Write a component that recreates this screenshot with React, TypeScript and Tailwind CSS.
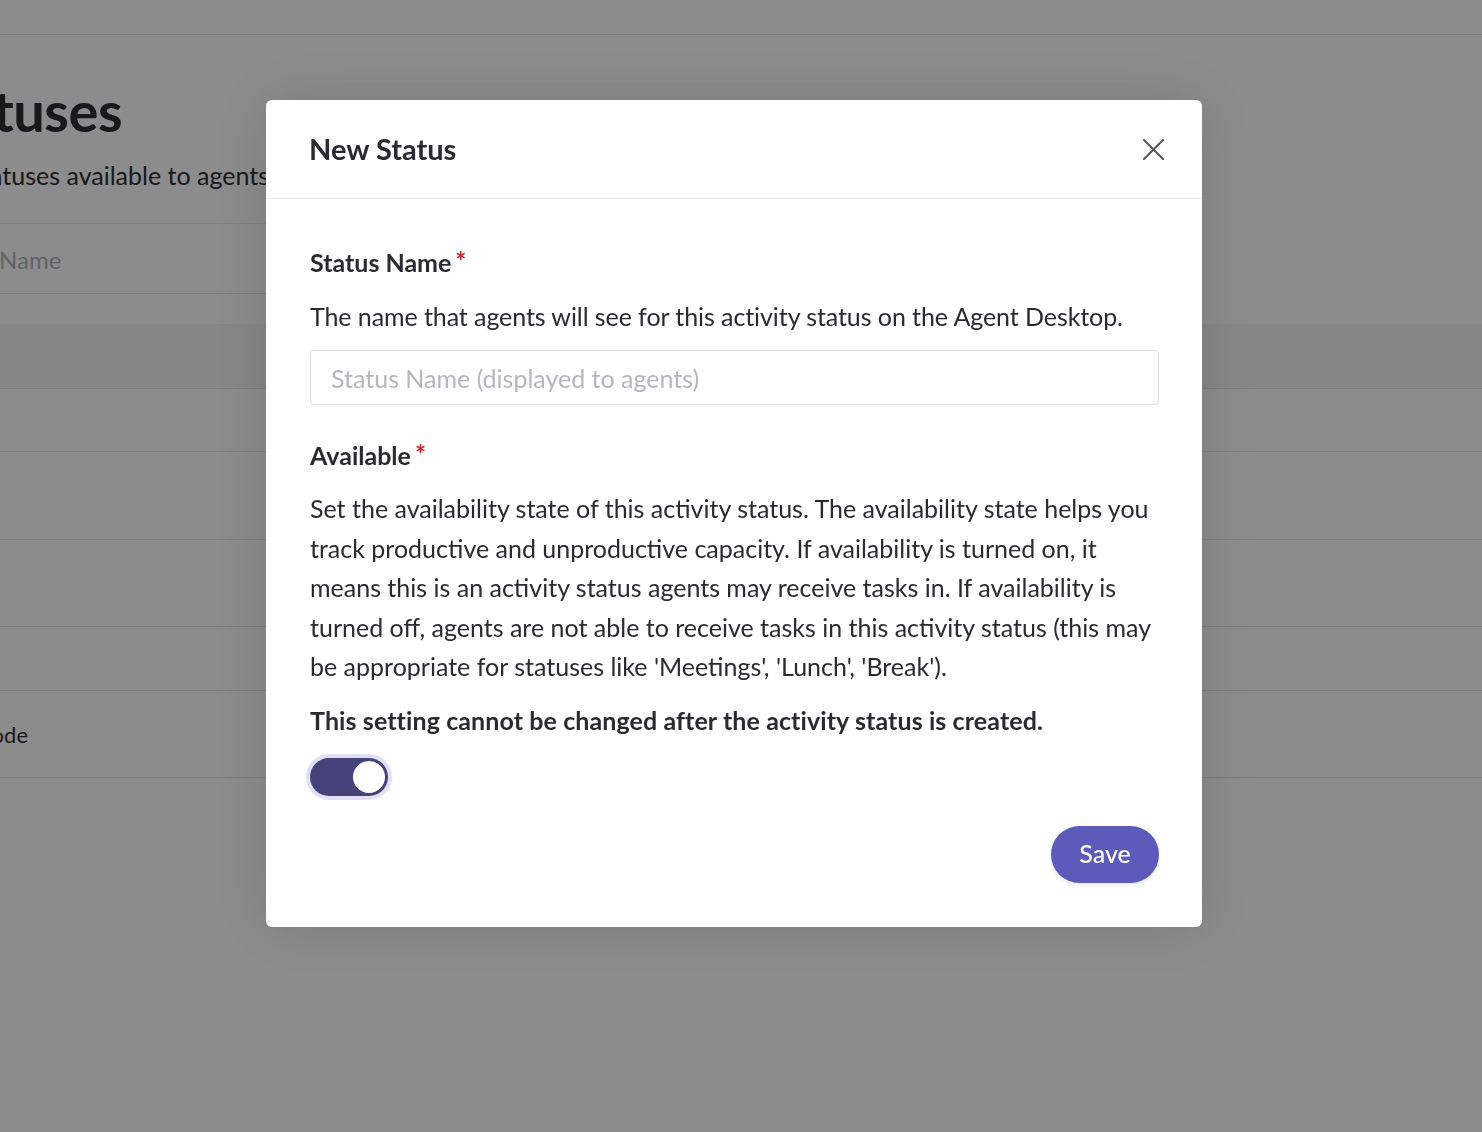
const font = { fontFamily: "Lato, 'Open Sans', sans-serif" };

const rows = [
  { h: "h-[64px]", bg: "bg-[#f5f5f6]", label: "" },
  { h: "h-[63px]", bg: "bg-white", label: "" },
  { h: "h-[88px]", bg: "bg-white", label: "" },
  { h: "h-[87px]", bg: "bg-white", label: "" },
  { h: "h-[64px]", bg: "bg-white", label: "" },
  { h: "h-[87px]", bg: "bg-white", label: "Offline Mode" },
];

function Background() {
  return (
    <div className="min-h-[1132px] bg-white overflow-hidden text-[#2e2e36]" style={font}>
      <div className="h-[35px] border-b border-[#e4e4e7]" />
      <div className="flex w-[122px] justify-end mt-[44px] whitespace-nowrap">
        <h1 className="text-[56px] font-bold leading-[64px] tracking-[-0.5px]">Activity Statuses</h1>
      </div>
      <div className="flex w-[269px] justify-end mt-[16px] whitespace-nowrap">
        <p className="text-[25px] leading-[32px]">Manage the activity statuses available to agents</p>
      </div>
      <div className="w-[1000px] mt-[32px] border-t border-[#e4e4e7] border-b h-[71px] flex items-center">
        <span className="text-[24px] text-[#b4b4ba] mt-[3px] -ml-[1px]">Name</span>
      </div>
      <div className="h-[30px]" />
      {rows.map((r, i) => (
        <div key={i} className={`${r.h} ${r.bg} ${i > 0 ? "border-t border-[#e4e4e7]" : ""} flex items-center`}>
          {r.label && (
            <div className="flex w-[28px] justify-end whitespace-nowrap">
              <span className="text-[22px]">{r.label}</span>
            </div>
          )}
        </div>
      ))}
      <div className="border-t border-[#e4e4e7]" />
    </div>
  );
}

function Toggle() {
  return (
    <div className="w-[86px] h-[46px] rounded-full bg-[#e2e0f7] p-[4px]">
      <div className="w-[78px] h-[38px] rounded-full bg-[#46437a] flex items-center justify-end pr-[3px]">
        <div className="w-[32px] h-[32px] rounded-full bg-white" />
      </div>
    </div>
  );
}

function Label({ children }: { children: React.ReactNode }) {
  return (
    <div className="flex items-start text-[25px] font-bold leading-[32px] text-[#2a2a31]">
      <span>{children}</span>
      <span className="text-[#cf2132] text-[26px] leading-[32px] ml-[4px] -mt-[1px]">*</span>
    </div>
  );
}

export default function App() {
  return (
    <div className="relative">
      <Background />
      <div className="fixed inset-0 bg-black/45 pl-[266px] pt-[100px]" style={font}>
        <div className="w-[936px] h-[827px] bg-white rounded-[6px] shadow-[0_0_60px_rgba(0,0,0,0.15)] flex flex-col">
          <div className="h-[99px] border-b border-[#e9e9ec] flex items-center justify-between pl-[43px] pr-[38px]">
            <h2 className="text-[29px] font-bold text-[#2a2a31]">New Status</h2>
            <svg width="21" height="21" viewBox="0 0 21 21" className="mt-[1px]">
              <path d="M1 1 L20 20 M20 1 L1 20" stroke="#55555f" strokeWidth="2" strokeLinecap="round" />
            </svg>
          </div>
          <div className="pl-[44px] pr-[43px] pt-[47px] text-[#2a2a31] flex flex-col">
            <Label>Status Name</Label>
            <p className="text-[25px] leading-[32px] mt-[22px] tracking-[-0.08px]">
              The name that agents will see for this activity status on the Agent Desktop.
            </p>
            <input
              className="mt-[18px] h-[55px] w-full border border-[#dcdce1] rounded-[4px] px-[20px] text-[25px] placeholder:text-[#b5b7bf] outline-none"
              placeholder="Status Name (displayed to agents)"
            />
            <div className="mt-[34px]">
              <Label>Available</Label>
            </div>
            <p className="text-[25px] leading-[39.5px] mt-[18px]">
              Set the availability state of this activity status. The availability state helps you track productive and
              unproductive capacity. If availability is turned on, it means this is an activity status agents may receive
              tasks in. If availability is turned off, agents are not able to receive tasks in this activity status (this
              may be appropriate for statuses like 'Meetings', 'Lunch', 'Break').
            </p>
            <p className="text-[25px] font-bold leading-[32px] mt-[17px] tracking-[0.1px]">
              This setting cannot be changed after the activity status is created.
            </p>
            <div className="mt-[18px] -ml-[4px]">
              <Toggle />
            </div>
            <div className="flex justify-end mt-[26px]">
              <button className="w-[108px] h-[57px] rounded-full bg-[#5c5bbb] text-white text-[25px] font-medium shadow-[0_3px_4px_rgba(0,0,0,0.08)]">
                Save
              </button>
            </div>
          </div>
        </div>
      </div>
    </div>
  );
}
